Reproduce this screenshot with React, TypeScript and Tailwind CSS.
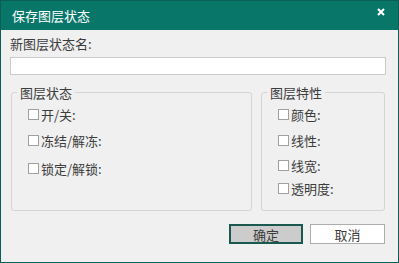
export default function App() {
  const font = { fontFamily: '"Microsoft YaHei", "Noto Sans CJK SC", sans-serif' };

  const Check = ({ label }: { label: string }) => (
    <label className="flex items-center h-[12px] text-[13px] leading-none text-[#3c3c3c]">
      <span className="w-[11px] h-[11px] border border-[#a0a0a0] bg-white mr-[2px] shrink-0" />
      <span>{label}</span>
    </label>
  );

  return (
    <div
      className="w-[399px] h-[263px] bg-[#f0f0f0] border border-[#0b5e55] flex flex-col overflow-hidden"
      style={font}
    >
      {/* title bar */}
      <div className="h-[29px] bg-[#08776a] flex items-center justify-between pl-[11px] pr-[13px] shrink-0">
        <span className="text-white text-[13px] leading-none">保存图层状态</span>
        <svg width="8" height="8" viewBox="0 0 8 8" className="-mt-[8px]">
          <path d="M1 1 L7 7 M7 1 L1 7" stroke="#fff" strokeWidth="2" />
        </svg>
      </div>

      {/* body */}
      <div className="flex flex-col pl-[9px] pr-[12px]">
        <div className="mt-[7px] text-[13px] leading-none text-[#3c3c3c]">新图层状态名:</div>
        <input className="mt-[7px] h-[18px] w-full border border-[#cccccc] bg-white outline-none" />

        <div className="flex gap-[9px] mt-[11px] pl-[1px]">
          {/* group 1 */}
          <fieldset className="w-[241px] h-[125px] border border-[#d4d4d4] rounded-[3px] p-0 m-0">
            <legend className="ml-[5px] px-[3px] text-[13px] leading-none text-[#3c3c3c]">图层状态</legend>
            <div className="flex flex-col gap-[14px] mt-[9px] pl-[16px]">
              <Check label="开/关:" />
              <Check label="冻结/解冻:" />
              <div className="mt-[2px]">
                <Check label="锁定/解锁:" />
              </div>
            </div>
          </fieldset>

          {/* group 2 */}
          <fieldset className="w-[124px] h-[125px] border border-[#d4d4d4] rounded-[3px] p-0 m-0">
            <legend className="ml-[5px] px-[3px] text-[13px] leading-none text-[#3c3c3c]">图层特性</legend>
            <div className="flex flex-col mt-[9px] pl-[16px]">
              <Check label="颜色:" />
              <div className="mt-[14px]">
                <Check label="线性:" />
              </div>
              <div className="mt-[13px]">
                <Check label="线宽:" />
              </div>
              <div className="mt-[11px]">
                <Check label="透明度:" />
              </div>
            </div>
          </fieldset>
        </div>

        <div className="flex justify-end gap-[7px] mt-[13px] pr-[1px]">
          <button className="w-[74px] h-[20px] bg-[#cccccc] border-2 border-[#19594f] text-[13px] leading-none text-[#3c3c3c]">
            确定
          </button>
          <button className="w-[75px] h-[20px] bg-white border border-[#adadad] text-[13px] leading-none text-[#3c3c3c]">
            取消
          </button>
        </div>
      </div>
    </div>
  );
}
